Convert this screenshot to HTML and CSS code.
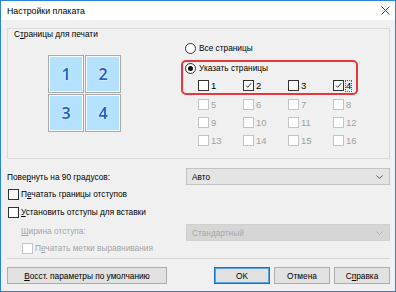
FILE: index.html
```html
<!DOCTYPE html>
<html lang="ru">

<head>
  <meta charset="UTF-8">
  <title>Настройки плаката</title>
  <link rel="stylesheet" href="styles.css">
</head>

<body>
  <div class="window">
    <div class="titlebar">
      <span>Настройки плаката</span>
      <svg class="close" width="9" height="9" viewBox="0 0 9 9">
        <path d="M0.5 0.5 L8.5 8.5 M8.5 0.5 L0.5 8.5" stroke="#333" stroke-width="1" fill="none" />
      </svg>
    </div>

    <div class="client">
      <div class="group">
        <div class="group-title">С<u>т</u>раницы для печати</div>
        <div class="group-body">
          <div class="preview">
            <div class="tile">1</div>
            <div class="tile">2</div>
            <div class="tile">3</div>
            <div class="tile">4</div>
          </div>

          <div class="options">
            <div class="radio-row first">
              <span class="radio"></span>
              <span>Все страницы</span>
            </div>

            <div class="highlight">
              <div class="radio-row">
                <span class="radio checked"></span>
                <span>Указать страницы</span>
              </div>
              <div class="page-grid top-row">
                <div class="page"><span class="box"></span><span>1</span></div>
                <div class="page"><span class="box checked"><svg viewBox="0 0 11 11"><path d="M2.5 5.5 L4.5 7.8 L8.8 2.6" /></svg></span><span>2</span></div>
                <div class="page"><span class="box"></span><span>3</span></div>
                <div class="page"><span class="box checked"><svg viewBox="0 0 11 11"><path d="M2.5 5.5 L4.5 7.8 L8.8 2.6" /></svg></span><span class="focus">4</span></div>
              </div>
            </div>

            <div class="page-grid disabled">
              <div class="page"><span class="box"></span><span>5</span></div>
              <div class="page"><span class="box"></span><span>6</span></div>
              <div class="page"><span class="box"></span><span>7</span></div>
              <div class="page"><span class="box"></span><span>8</span></div>
              <div class="page"><span class="box"></span><span>9</span></div>
              <div class="page"><span class="box"></span><span>10</span></div>
              <div class="page"><span class="box"></span><span>11</span></div>
              <div class="page"><span class="box"></span><span>12</span></div>
              <div class="page"><span class="box"></span><span>13</span></div>
              <div class="page"><span class="box"></span><span>14</span></div>
              <div class="page"><span class="box"></span><span>15</span></div>
              <div class="page"><span class="box"></span><span>16</span></div>
            </div>
          </div>
        </div>
      </div>

      <div class="field-row rotate-row">
        <span class="field-label">Пове<u>р</u>нуть на 90 градусов:</span>
        <div class="combo"><span>Авто</span><svg width="7" height="4" viewBox="0 0 7 4"><path d="M0.5 0.5 L3.5 3.5 L6.5 0.5" /></svg></div>
      </div>

      <div class="check-row">
        <span class="box"></span><span>П<u>е</u>чатать границы отступов</span>
      </div>
      <div class="check-row">
        <span class="box"></span><span><u>У</u>становить отступы для вставки</span>
      </div>

      <div class="field-row width-row disabled">
        <span class="field-label"><u>Ш</u>ирина отступа:</span>
        <div class="combo"><span>Стандартный</span><svg width="7" height="4" viewBox="0 0 7 4"><path d="M0.5 0.5 L3.5 3.5 L6.5 0.5" /></svg></div>
      </div>

      <div class="check-row sub disabled">
        <span class="box"></span><span>П<u>е</u>чатать метки выравнивания</span>
      </div>

      <div class="separator"></div>

      <div class="buttons">
        <button class="btn wide"><u>В</u>осст. параметры по умолчанию</button>
        <div class="btn-group">
          <button class="btn default">OK</button>
          <button class="btn">Отмена</button>
          <button class="btn">С<u>п</u>равка</button>
        </div>
      </div>
    </div>
  </div>
</body>

</html>
```

FILE: styles.css
```css
* {
  box-sizing: border-box;
  margin: 0;
  padding: 0;
}

body {
  width: 396px;
  height: 292px;
  overflow: hidden;
  background: #ffffff;
  font-family: "Liberation Sans", Arial, sans-serif;
  font-size: 8.3px;
  color: #000000;
}

u {
  text-decoration: underline;
  text-underline-offset: 1px;
}

.window {
  width: 396px;
  height: 292px;
  border: 1px solid #2b84d6;
  background: #f0f0f0;
  display: flex;
  flex-direction: column;
}

.titlebar {
  height: 19px;
  background: #ffffff;
  display: flex;
  align-items: center;
  justify-content: space-between;
  padding: 0 5px 0 6px;
  font-size: 8.8px;
}

.close path {
  stroke: #444;
}

.client {
  flex: 1;
  padding: 8px 5px 0 6px;
  display: flex;
  flex-direction: column;
}

/* group box */
.group {
  height: 131px;
  border: 1px solid #dadada;
}

.group-title {
  height: 10px;
  line-height: 10px;
  padding-left: 6px;
}

.group-body {
  display: grid;
  grid-template-columns: 173px 177px;
}

.preview {
  margin: 16px 0 0 40px;
  display: grid;
  grid-template-columns: 36px 36px;
  grid-template-rows: 38px 38px;
  gap: 1px 1px;
  align-content: start;
}

.tile {
  border: 1px solid #a9a9a9;
  box-shadow: inset 0 0 0 1px #f4fbff;
  background: #b4e1fd;
  display: flex;
  align-items: center;
  justify-content: center;
  font-family: "Noto Sans", sans-serif;
  font-weight: 600;
  font-size: 16px;
  color: #1b63c8;
  text-shadow: 0 0 2px #ffffff, 0 0 1px #ffffff;
}

.radio-row {
  height: 12px;
  display: flex;
  align-items: center;
  gap: 3px;
  padding-left: 2px;
}

.radio-row.first {
  height: 18px;
  padding-left: 4px;
  margin-bottom: 3px;
}

.radio {
  width: 11px;
  height: 11px;
  border: 1px solid #333333;
  border-radius: 50%;
  background: #ffffff;
  display: flex;
  align-items: center;
  justify-content: center;
}

.radio.checked::after {
  content: "";
  width: 5px;
  height: 5px;
  border-radius: 50%;
  background: #111111;
}

.highlight {
  height: 35px;
  border: 2px solid #e2393e;
  border-radius: 5px;
}

.page-grid {
  display: grid;
  grid-template-columns: repeat(4, 45px);
  padding-left: 15px;
  font-size: 9.5px;
}

.page-grid.top-row {
  height: 19px;
  padding-top: 6px;
}

.page-grid.disabled {
  padding-left: 17px;
  grid-auto-rows: 18px;
  color: #a2a2a2;
}

.page {
  display: flex;
  align-items: center;
  gap: 2px;
  height: 11px;
}

.page-grid.disabled .page {
  height: 18px;
}

.box {
  width: 11px;
  height: 11px;
  flex: none;
  border: 1px solid #333333;
  background: #ffffff;
  display: flex;
}

.box svg {
  width: 9px;
  height: 9px;
}

.box path {
  fill: none;
  stroke: #222222;
  stroke-width: 1.1;
}

.disabled .box {
  border-color: #c4c4c4;
}

.focus {
  outline: 1px dotted #555555;
  line-height: 10px;
}

/* lower controls */
.field-row {
  display: flex;
  align-items: center;
  justify-content: space-between;
}

.rotate-row {
  margin-top: 9px;
  height: 17px;
}

.width-row {
  height: 20px;
  padding: 3px 0 0 14px;
}

.width-row .field-label {
  padding-bottom: 4px;
}

.combo {
  width: 204px;
  height: 17px;
  border: 1px solid #c3c3c3;
  background: #e4e4e4;
  display: flex;
  align-items: center;
  justify-content: space-between;
  padding: 0 6px 0 5px;
}

.combo path {
  fill: none;
  stroke: #555555;
  stroke-width: 1;
}

.field-row.disabled {
  color: #a5a5a5;
}

.field-row.disabled .combo {
  background: #d6d6d6;
  border-color: #d0d0d0;
  color: #a8a8a8;
}

.field-row.disabled .combo path {
  stroke: #b2b2b2;
}

.check-row {
  height: 18px;
  display: flex;
  align-items: center;
  gap: 2px;
  padding-left: 1px;
}

.check-row.sub {
  height: 14px;
  padding-left: 15px;
  color: #a5a5a5;
}

.separator {
  margin-top: 3px;
  height: 1px;
  background: #d5d5d5;
}

.buttons {
  margin-top: 8px;
  display: flex;
  justify-content: space-between;
}

.btn-group {
  display: flex;
  gap: 4px;
}

.btn {
  height: 17px;
  width: 56px;
  border: 1px solid #adadad;
  background: #e1e1e1;
  font-family: inherit;
  font-size: 8.3px;
  color: #000000;
}

.btn.wide {
  width: 160px;
}

.btn.default {
  border-color: #0a74d4;
  box-shadow: inset 0 0 0 1px #5aa2e4;
}
```
